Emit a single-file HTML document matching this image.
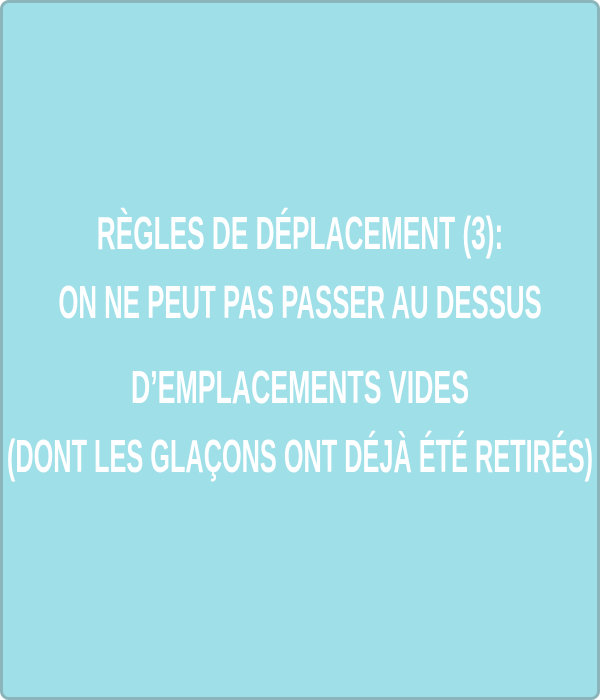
<!DOCTYPE html>
<html><head><style>
html,body{margin:0;padding:0;background:#fff;overflow:hidden;}
.box{position:absolute;left:0;top:0;width:594px;height:694px;border:3px solid #8bb5bb;border-radius:9px;background:#9fdfe8;}
.l{position:absolute;left:300px;color:#fff;font-family:"Liberation Sans",sans-serif;font-size:46px;font-weight:bold;text-transform:uppercase;white-space:nowrap;transform-origin:0 0;}
</style></head><body>
<div class="box"></div>
<div class="l" style="top:206px;transform:scaleX(0.57) translateX(-50%)">Règles de déplacement (3):</div>
<div class="l" style="top:275px;transform:scaleX(0.56) translateX(-50%)">On ne peut pas passer au dessus</div>
<div class="l" style="top:360px;transform:scaleX(0.58) translateX(-50%)">d’emplacements vides</div>
<div class="l" style="top:429px;transform:scaleX(0.55) translateX(-50%)">(dont les glaçons ont déjà été retirés)</div>
</body></html>
